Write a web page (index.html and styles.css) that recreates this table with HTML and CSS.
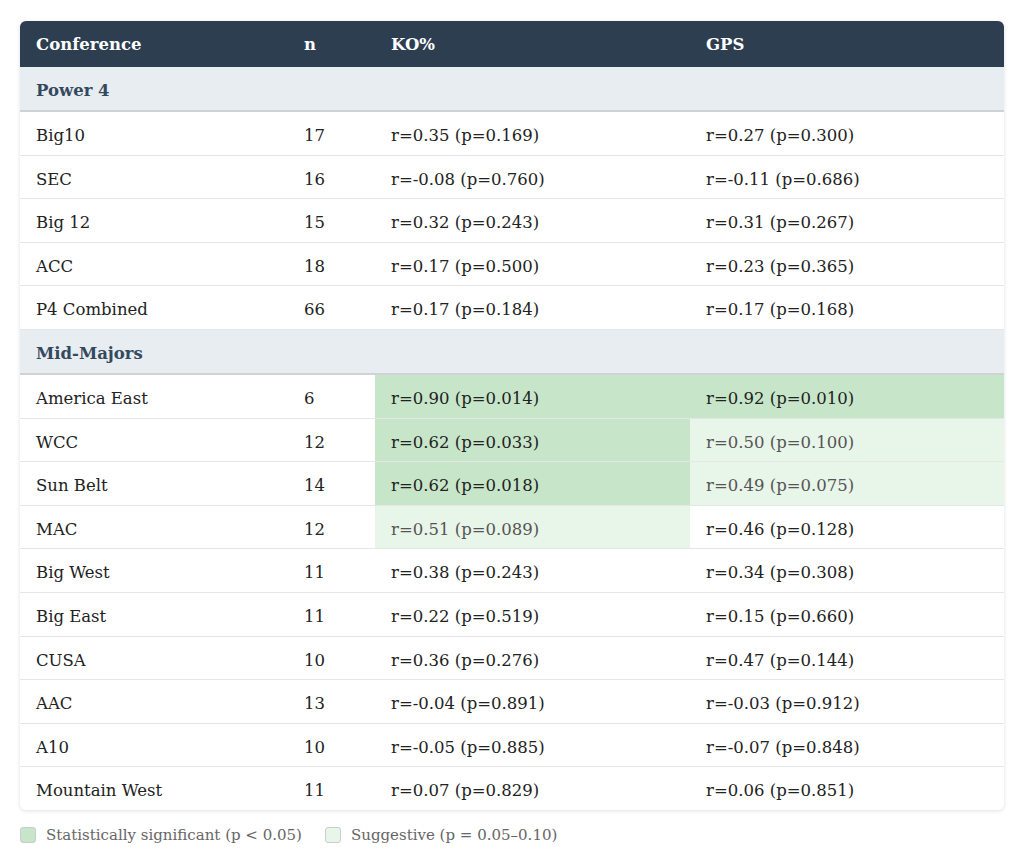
FILE: index.html
```html
<!DOCTYPE html>
<html>
<head>
<meta charset="utf-8">
<link rel="stylesheet" href="styles.css">
</head>
<body>
<div class="wrap">
<table class="tbl">
<colgroup><col class="c1"><col class="c2"><col class="c3"><col class="c4"></colgroup>
<thead>
<tr><th>Conference</th><th>n</th><th>KO%</th><th>GPS</th></tr>
</thead>
<tbody>
<tr class="group"><td colspan="4">Power 4</td></tr>
<tr><td>Big10</td><td>17</td><td>r=0.35 (p=0.169)</td><td>r=0.27 (p=0.300)</td></tr>
<tr><td>SEC</td><td>16</td><td>r=-0.08 (p=0.760)</td><td>r=-0.11 (p=0.686)</td></tr>
<tr><td>Big 12</td><td>15</td><td>r=0.32 (p=0.243)</td><td>r=0.31 (p=0.267)</td></tr>
<tr><td>ACC</td><td>18</td><td>r=0.17 (p=0.500)</td><td>r=0.23 (p=0.365)</td></tr>
<tr><td>P4 Combined</td><td>66</td><td>r=0.17 (p=0.184)</td><td>r=0.17 (p=0.168)</td></tr>
<tr class="group"><td colspan="4">Mid-Majors</td></tr>
<tr><td>America East</td><td>6</td><td class="sig">r=0.90 (p=0.014)</td><td class="sig">r=0.92 (p=0.010)</td></tr>
<tr><td>WCC</td><td>12</td><td class="sig">r=0.62 (p=0.033)</td><td class="sug">r=0.50 (p=0.100)</td></tr>
<tr><td>Sun Belt</td><td>14</td><td class="sig">r=0.62 (p=0.018)</td><td class="sug">r=0.49 (p=0.075)</td></tr>
<tr><td>MAC</td><td>12</td><td class="sug">r=0.51 (p=0.089)</td><td>r=0.46 (p=0.128)</td></tr>
<tr><td>Big West</td><td>11</td><td>r=0.38 (p=0.243)</td><td>r=0.34 (p=0.308)</td></tr>
<tr><td>Big East</td><td>11</td><td>r=0.22 (p=0.519)</td><td>r=0.15 (p=0.660)</td></tr>
<tr><td>CUSA</td><td>10</td><td>r=0.36 (p=0.276)</td><td>r=0.47 (p=0.144)</td></tr>
<tr><td>AAC</td><td>13</td><td>r=-0.04 (p=0.891)</td><td>r=-0.03 (p=0.912)</td></tr>
<tr><td>A10</td><td>10</td><td>r=-0.05 (p=0.885)</td><td>r=-0.07 (p=0.848)</td></tr>
<tr class="last"><td>Mountain West</td><td>11</td><td>r=0.07 (p=0.829)</td><td>r=0.06 (p=0.851)</td></tr>
</tbody>
</table>
</div>
<div class="legend">
<span class="item"><span class="sw sw-sig"></span>Statistically significant (p &lt; 0.05)</span>
<span class="item"><span class="sw sw-sug"></span>Suggestive (p = 0.05–0.10)</span>
</div>
</body>
</html>
```
FILE: styles.css
```css
html, body { margin: 0; padding: 0; background: #fff; }
body {
  padding: 21px 20px 0 20px;
  font-family: "DejaVu Serif", "Liberation Serif", serif;
  color: #222;
}
.wrap {
  border-radius: 6px;
  overflow: hidden;
  box-shadow: 0 1px 4px rgba(0,0,0,0.12);
  background: #fff;
}
.tbl {
  width: 100%;
  border-collapse: collapse;
  table-layout: fixed;
  font-size: 16.5px;
}
.c1 { width: 268px; }
.c2 { width: 87px; }
.c3 { width: 315px; }
.c4 { width: auto; }
.tbl th {
  background: #2c3e50;
  color: #fff;
  text-align: left;
  font-weight: bold;
  padding: 11px 16px 9px 16px;
  line-height: 26px;
}
.tbl td {
  padding: 12px 16px 6px 16px;
  line-height: 24.6px;
  border-bottom: 1px solid #e6e6e6;
  white-space: nowrap;
}
.tbl tr.group td {
  background: #e8edf1;
  color: #34495e;
  font-weight: bold;
  padding: 12px 16px 6.4px 16px;
  border-bottom: 2px solid #cfd3d6;
}
.tbl tr.last td { border-bottom: none; }
.tbl td.sig { background: #c7e6c9; }
.tbl td.sug { background: #e8f5e9; color: #555; }
.legend {
  display: flex;
  gap: 23px;
  margin-top: 16px;
  font-size: 15px;
  color: #666;
  font-family: "DejaVu Serif", "Liberation Serif", serif;
}
.item { display: flex; align-items: center; gap: 10px; }
.sw {
  width: 16px; height: 16px;
  border-radius: 3px;
  border: 1px solid #ccc;
  box-sizing: border-box;
}
.sw-sig { background: #c7e6c9; }
.sw-sug { background: #e8f5e9; }
```
